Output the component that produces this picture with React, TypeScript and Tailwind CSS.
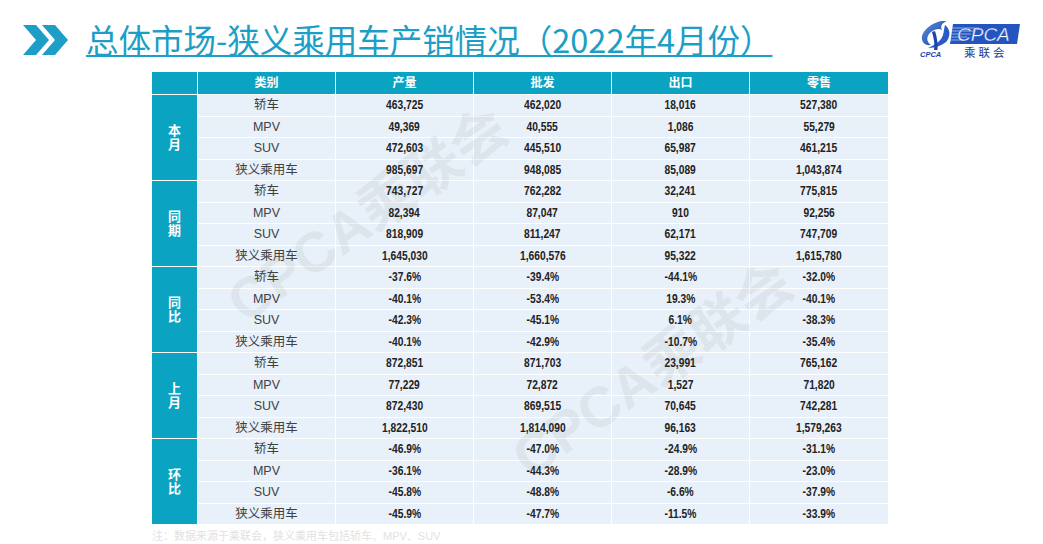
import React from "react";

type Group = { name: [string, string]; rows: string[][] };

const groups: Group[] = [
  {
    name: ["本", "月"],
    rows: [
      ["轿车", "463,725", "462,020", "18,016", "527,380"],
      ["MPV", "49,369", "40,555", "1,086", "55,279"],
      ["SUV", "472,603", "445,510", "65,987", "461,215"],
      ["狭义乘用车", "985,697", "948,085", "85,089", "1,043,874"],
    ],
  },
  {
    name: ["同", "期"],
    rows: [
      ["轿车", "743,727", "762,282", "32,241", "775,815"],
      ["MPV", "82,394", "87,047", "910", "92,256"],
      ["SUV", "818,909", "811,247", "62,171", "747,709"],
      ["狭义乘用车", "1,645,030", "1,660,576", "95,322", "1,615,780"],
    ],
  },
  {
    name: ["同", "比"],
    rows: [
      ["轿车", "-37.6%", "-39.4%", "-44.1%", "-32.0%"],
      ["MPV", "-40.1%", "-53.4%", "19.3%", "-40.1%"],
      ["SUV", "-42.3%", "-45.1%", "6.1%", "-38.3%"],
      ["狭义乘用车", "-40.1%", "-42.9%", "-10.7%", "-35.4%"],
    ],
  },
  {
    name: ["上", "月"],
    rows: [
      ["轿车", "872,851", "871,703", "23,991", "765,162"],
      ["MPV", "77,229", "72,872", "1,527", "71,820"],
      ["SUV", "872,430", "869,515", "70,645", "742,281"],
      ["狭义乘用车", "1,822,510", "1,814,090", "96,163", "1,579,263"],
    ],
  },
  {
    name: ["环", "比"],
    rows: [
      ["轿车", "-46.9%", "-47.0%", "-24.9%", "-31.1%"],
      ["MPV", "-36.1%", "-44.3%", "-28.9%", "-23.0%"],
      ["SUV", "-45.8%", "-48.8%", "-6.6%", "-37.9%"],
      ["狭义乘用车", "-45.9%", "-47.7%", "-11.5%", "-33.9%"],
    ],
  },
];

const headers = ["类别", "产量", "批发", "出口", "零售"];

function Chevrons() {
  return (
    <svg width="46" height="30" viewBox="0 0 46 30">
      <polygon points="0,0 13,0 26,15 13,30 0,30 13,15" fill="#1c9ec6" />
      <polygon points="19,0 32,0 45,15 32,30 19,30 32,15" fill="#1c9ec6" />
    </svg>
  );
}

function Logo() {
  return (
    <svg width="102" height="40" viewBox="0 0 102 40">
      <defs>
        <linearGradient id="sw" x1="0" y1="0" x2="1" y2="1">
          <stop offset="0" stopColor="#5a8fe0" />
          <stop offset="1" stopColor="#1a3fa6" />
        </linearGradient>
      </defs>
      <path
        d="M22 1 C13 3 5 9 3 16 C2 22 6 26 12 25 C7 22 7 16 12 12 C16 9 20 8 23 10 C21 6 23 3 28 1 Z"
        fill="url(#sw)"
      />
      <path
        d="M26 5 C31 9 32 15 28 21 C24 25 17 28 9 28 C16 25 22 21 24 15 C25 12 25 8 26 5 Z"
        fill="#2a5cc4"
      />
      <path d="M13 12 C15 19 16 25 15 30 L18.5 30 C19 23 18 17 16 11 Z" fill="#1d44aa" />
      <text
        x="1"
        y="37"
        fontFamily="Liberation Sans, sans-serif"
        fontSize="7.5"
        fontWeight="bold"
        fontStyle="italic"
        fill="#1d44aa"
      >
        CPCA
      </text>
      <polygon points="34,4 101,4 98,24 31,24" fill="#2354c0" />
      <g stroke="#ffffff" strokeWidth="0.7" opacity="0.75">
        <line x1="33" y1="8" x2="60" y2="8" />
        <line x1="33" y1="11" x2="56" y2="11" />
        <line x1="32" y1="14" x2="52" y2="14" />
        <line x1="32" y1="17" x2="48" y2="17" />
        <line x1="31" y1="20" x2="44" y2="20" />
      </g>
      <text
        x="38"
        y="21"
        fontFamily="Liberation Sans, sans-serif"
        fontSize="19"
        fontStyle="italic"
        fill="#ffffff"
        stroke="#2354c0"
        strokeWidth="0.4"
      >
        CPCA
      </text>
      <text
        x="45"
        y="37"
        fontFamily="Noto Sans CJK SC, sans-serif"
        fontSize="11.5"
        letterSpacing="3"
        fill="#1d3c8f"
      >
        乘联会
      </text>
    </svg>
  );
}

export default function App() {
  const font = {
    fontFamily: '"Liberation Sans", "Noto Sans CJK SC", sans-serif',
  };
  return (
    <div
      className="relative w-[1043px] h-[544px] bg-white overflow-hidden"
      style={font}
    >
      {/* header */}
      <div className="flex items-start justify-between h-[72px]">
        <div className="flex items-start pl-[23px] pt-[25px] gap-[17px]">
          <Chevrons />
          <div
            className="text-[32.5px] leading-[32px] text-[#1c9ec6] underline decoration-[1.5px] underline-offset-[2px] -mt-[2px]"
            style={{ fontFamily: '"Noto Sans CJK SC", sans-serif' }}
          >
            总体市场-狭义乘用车产销情况（2022年4月份）
          </div>
        </div>
        <div className="pt-[20px] pr-[22px]">
          <Logo />
        </div>
      </div>

      {/* table */}
      <div className="ml-[152px] w-[736px] grid grid-cols-[45px_137px_137px_137px_137px_138px] grid-rows-[22px_repeat(20,20.5px)] gap-px bg-white">
        <div className="bg-[#0aa3c2]" />
        {headers.map((h) => (
          <div
            key={h}
            className="bg-[#0aa3c2] text-white font-bold text-[12px] leading-none flex items-center justify-center"
          >
            {h}
          </div>
        ))}
        {groups.map((g, gi) => (
          <React.Fragment key={gi}>
            <div className="row-span-4 bg-[#0aa3c2] text-white font-bold text-[13px] leading-[14px] flex flex-col items-center justify-center">
              <span>{g.name[0]}</span>
              <span>{g.name[1]}</span>
            </div>
            {g.rows.map((r, ri) =>
              r.map((c, ci) =>
                ci === 0 ? (
                  <div
                    key={`${ri}-${ci}`}
                    className="bg-[#e8f0f9] text-[#404040] text-[12.5px] leading-none flex items-center justify-center"
                  >
                    {c}
                  </div>
                ) : (
                  <div
                    key={`${ri}-${ci}`}
                    className="bg-[#e8f0f9] flex items-center justify-center"
                  >
                    <span className="inline-block scale-x-[0.82] text-[#222222] text-[12.5px] leading-none font-bold">
                      {c}
                    </span>
                  </div>
                )
              )
            )}
          </React.Fragment>
        ))}
      </div>

      {/* faint footnote */}
      <div className="ml-[152px] mt-[7px] text-[11px] leading-none text-[#e2e2e2] whitespace-nowrap">
        注：数据来源于乘联会，狭义乘用车包括轿车、MPV、SUV
      </div>

      {/* watermarks */}
      <div className="pointer-events-none absolute left-[368px] top-[215px] -translate-x-1/2 -translate-y-1/2 -rotate-[35deg] whitespace-nowrap text-[56px] leading-none font-bold text-[rgba(90,90,90,0.08)]">
        CPCA乘联会
      </div>
      <div className="pointer-events-none absolute left-[653px] top-[370px] -translate-x-1/2 -translate-y-1/2 -rotate-[35deg] whitespace-nowrap text-[56px] leading-none font-bold text-[rgba(90,90,90,0.08)]">
        CPCA乘联会
      </div>
    </div>
  );
}
